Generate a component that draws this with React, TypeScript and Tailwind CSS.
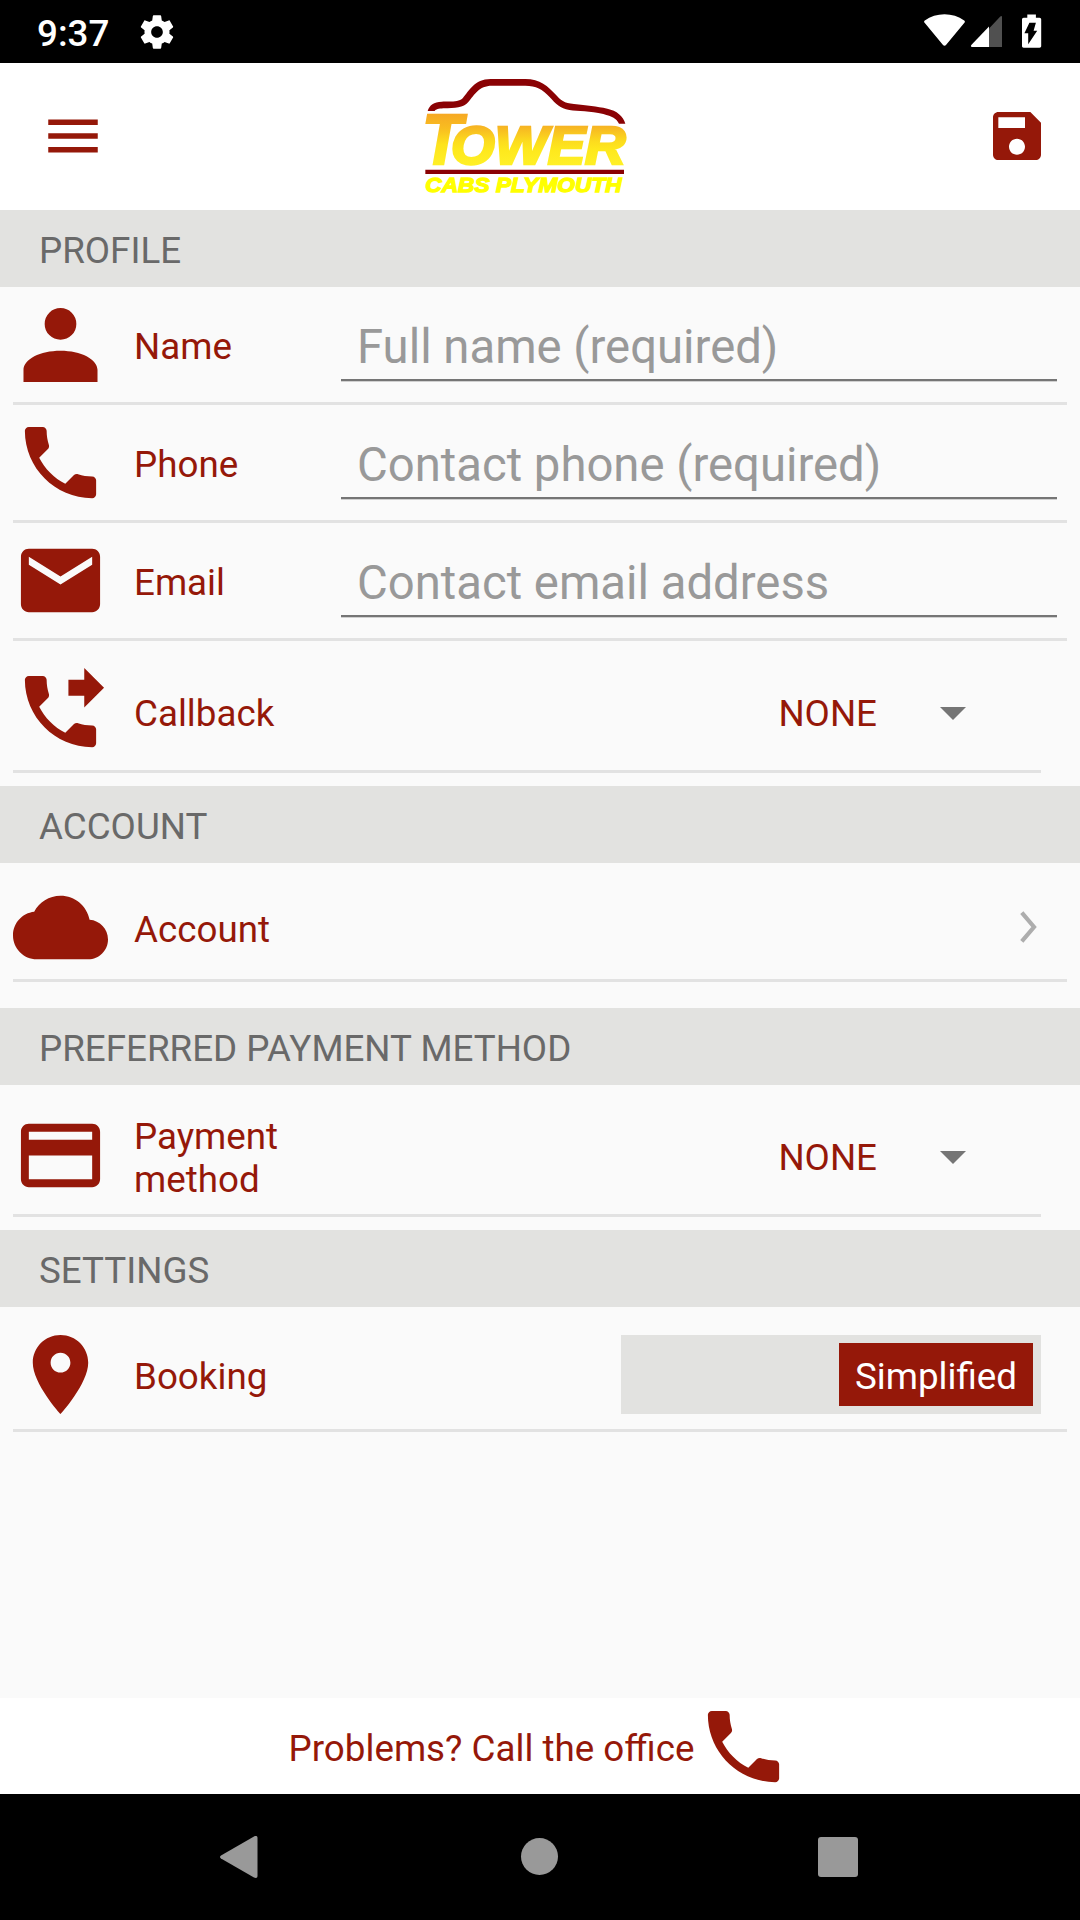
import type { ReactNode } from "react";

const PHONE =
  "M6.62 10.79c1.44 2.83 3.76 5.14 6.59 6.59l2.2-2.2c.27-.27.67-.36 1.02-.24 1.12.37 2.33.57 3.57.57.55 0 1 .45 1 1V20c0 .55-.45 1-1 1-9.39 0-17-7.61-17-17 0-.55.45-1 1-1h3.5c.55 0 1 .45 1 1 0 1.25.2 2.45.57 3.57.11.35.03.74-.25 1.02l-2.2 2.2z";
const PERSON =
  "M12 2.8a4 4 0 1 1 0 8 4 4 0 0 1 0-8zM2.65 21.5v-3.1c0-2.7 4.2-4.85 9.35-4.85s9.35 2.15 9.35 4.85v3.1z";
const MAIL =
  "M20 4H4c-1.1 0-1.99.9-1.99 2L2 18c0 1.1.9 2 2 2h16c1.1 0 2-.9 2-2V6c0-1.1-.9-2-2-2zm0 4l-8 5-8-5V6l8 5 8-5v2z";
const FORWARD = PHONE + "M18 11l5-5-5-5v3h-4v4h4v3z";
const CLOUD =
  "M19.35 10.04C18.67 6.59 15.64 4 12 4 9.11 4 6.6 5.64 5.35 8.04 2.34 8.36 0 10.91 0 14c0 3.31 2.69 6 6 6h13c2.76 0 5-2.24 5-5 0-2.64-2.05-4.78-4.65-4.96z";
const CARD =
  "M20 4H4c-1.11 0-1.99.89-1.99 2L2 18c0 1.11.89 2 2 2h16c1.11 0 2-.89 2-2V6c0-1.11-.89-2-2-2zm0 14H4v-6h16v6zm0-10H4V6h16v2z";
const PIN =
  "M12 2C8.13 2 5 5.13 5 9c0 5.25 7 13 7 13s7-7.75 7-13c0-3.87-3.13-7-7-7zm0 9.5c-1.38 0-2.5-1.12-2.5-2.5s1.12-2.5 2.5-2.5 2.5 1.12 2.5 2.5-1.12 2.5-2.5 2.5z";
const SAVE =
  "M17 3H5c-1.11 0-2 .9-2 2v14c0 1.1.89 2 2 2h14c1.1 0 2-.9 2-2V7l-4-4zm-5 16c-1.66 0-3-1.34-3-3s1.34-3 3-3 3 1.34 3 3-1.34 3-3 3zm3-10H5V5h10v4z";
const GEAR =
  "M19.43 12.98c.04-.32.07-.64.07-.98s-.03-.66-.07-.98l2.11-1.65c.19-.15.24-.42.12-.64l-2-3.46c-.12-.22-.39-.3-.61-.22l-2.49 1c-.52-.4-1.08-.73-1.69-.98l-.38-2.65C14.46 2.18 14.25 2 14 2h-4c-.25 0-.46.18-.49.42l-.38 2.65c-.61.25-1.17.59-1.69.98l-2.49-1c-.23-.09-.49 0-.61.22l-2 3.46c-.13.22-.07.49.12.64l2.11 1.65c-.04.32-.07.65-.07.98s.03.66.07.98l-2.11 1.65c-.19.15-.24.42-.12.64l2 3.46c.12.22.39.3.61.22l2.49-1c.52.4 1.08.73 1.69.98l.38 2.65c.03.24.24.42.49.42h4c.25 0 .46-.18.49-.42l.38-2.65c.61-.25 1.17-.59 1.69-.98l2.49 1c.23.09.49 0 .61-.22l2-3.46c.12-.22.07-.49-.12-.64l-2.11-1.65zM12 15.5c-1.93 0-3.5-1.57-3.5-3.5s1.57-3.5 3.5-3.5 3.5 1.57 3.5 3.5-1.57 3.5-3.5 3.5z";

function Icon({ d, className = "size-[95px]" }: { d: string; className?: string }) {
  return (
    <svg viewBox="0 0 24 24" fill="currentColor" className={`shrink-0 ${className}`}>
      <path d={d} />
    </svg>
  );
}

function StatusBar() {
  return (
    <div className="flex h-[63px] shrink-0 items-start bg-black text-white">
      <span className="ml-[37px] mt-[12px] w-[75px] text-[36.75px] leading-[43px] font-medium">9:37</span>
      <Icon d={GEAR} className="ml-[25px] mt-[12px] size-[40px]" />
      <svg viewBox="0 0 124 40" className="ml-auto mr-[36px] mt-[11px] h-[40px] w-[124px]">
        <path
          d="M4.6 11.8C3.9 11 3.9 10.1 4.8 9.4C16 1.2 33 1.2 44.2 9.4C45.1 10.1 45.1 11 44.4 11.8L26.2 33.8C25.2 35 23.8 35 22.8 33.8z"
          fill="#fff"
        />
        <path d="M69 17.5L80.3 5.6C81.3 4.6 82 5 82 6V36H69z" fill="#505050" />
        <path d="M69 15.6V36H52C50.8 36 50.6 34.8 51.3 34z" fill="#fff" />
        <path
          d="M107.3 3.5h8.6v3.3h3.6c1 0 1.7.7 1.7 1.7v26.6c0 1-.7 1.7-1.7 1.7h-15.8c-1 0-1.7-.7-1.7-1.7V8.5c0-1 .7-1.7 1.7-1.7h3.6z"
          fill="#fff"
        />
        <path d="M109.4 11.8h6.5l-2.3 8h3.6l-9 13.5v-11h-3.8z" fill="#000" />
      </svg>
    </div>
  );
}

function Logo() {
  return (
    <svg viewBox="0 0 780 450" className="h-[150px] w-[260px]">
      <defs>
        <linearGradient id="gold" gradientUnits="userSpaceOnUse" x1="0" y1="160" x2="0" y2="315">
          <stop offset="0" stopColor="#f6a824" />
          <stop offset=".3" stopColor="#f9be20" />
          <stop offset=".6" stopColor="#fde31d" />
          <stop offset="1" stopColor="#fff026" />
        </linearGradient>
        <linearGradient id="goldSmall" gradientUnits="userSpaceOnUse" x1="0" y1="197" x2="0" y2="315">
          <stop offset="0" stopColor="#f6b223" />
          <stop offset=".4" stopColor="#fcdc1e" />
          <stop offset=".6" stopColor="#fee81d" />
          <stop offset="1" stopColor="#fff026" />
        </linearGradient>
      </defs>
      <path
        d="M83 153C88 135 102 126 125 125C150 124 175 128 188 115C208 92 222 58 272 57H376C420 57 445 80 466 103C482 121 492 130 522 132C560 136 590 139 622 146C650 152 670 168 676 191H657C650 176 636 169 610 162C570 153 535 154 508 150C480 145 468 132 448 110C428 88 408 77 376 77H276C236 77 224 104 205 126C190 144 165 144 130 145C115 146 108 148 104 153Z"
        fill="#8a0204"
      />
      <g fontFamily="Liberation Sans" fontWeight="700" fontStyle="italic">
        <text x="66" y="312" fontSize="213" textLength="120" lengthAdjust="spacingAndGlyphs" fill="url(#gold)" stroke="url(#gold)" strokeWidth="7">
          T
        </text>
        <text x="153" y="312" fontSize="161" textLength="524" lengthAdjust="spacingAndGlyphs" fill="url(#goldSmall)" stroke="url(#goldSmall)" strokeWidth="8">
          OWER
        </text>
        <text x="76" y="397" fontSize="62" textLength="589" lengthAdjust="spacingAndGlyphs" fill="#ff0" stroke="#ff0" strokeWidth="4">
          CABS PLYMOUTH
        </text>
      </g>
      <path d="M76 329H672V342H76z" fill="#8a0204" />
    </svg>
  );
}

function Header() {
  return (
    <div className="flex h-[147px] shrink-0 items-start justify-between bg-white">
      <Icon d="M3 18h18v-2H3v2zm0-5h18v-2H3v2zm0-7v2h18V6H3z" className="ml-[40px] mt-[40px] size-[66px]" />
      <div className="-mt-[3px] ml-[173px]">
        <Logo />
      </div>
      <Icon d={SAVE} className="ml-[204px] mr-[31px] mt-[41px] size-[64px]" />
    </div>
  );
}

function SectionTitle({ children }: { children: ReactNode }) {
  return (
    <div className="h-[77px] shrink-0 bg-[#e2e2e0] pl-[39px] pt-[19px] text-[36.75px] leading-[43px] text-[#696969]">
      {children}
    </div>
  );
}

function Row({
  icon,
  label,
  row,
  pad,
  labelPad,
  children,
}: {
  icon: string;
  label: string;
  row: string;
  pad: string;
  labelPad: string;
  children?: ReactNode;
}) {
  return (
    <div className={`ml-[13px] flex shrink-0 items-start border-b-[3px] border-[#e2e2e2] ${row}`}>
      <div className={pad}>
        <Icon d={icon} />
      </div>
      <div className={`ml-[26px] w-[184px] shrink-0 text-[36.75px] leading-[43px] ${labelPad}`}>{label}</div>
      {children}
    </div>
  );
}

function FieldRow({ icon, label, hint }: { icon: string; label: string; hint: string }) {
  return (
    <Row icon={icon} label={label} row="mr-[13px] h-[118px]" pad="pt-[10px]" labelPad="pt-[38px]">
      <div className="ml-[23px] mt-[31px] h-[63px] w-[716px] border-b-2 border-[#757575] pl-[16px] pt-[2px] text-[47.25px] leading-[55px] text-[#999999] shadow-[0_1px_0_#d0d0d0]">
        {hint}
      </div>
    </Row>
  );
}

function Spinner() {
  return (
    <div className="ml-auto mr-[75px] mt-[51px] flex items-center">
      <span className="text-[36.75px] leading-[43px]">NONE</span>
      <svg viewBox="0 0 26 13" className="ml-[63px] h-[13px] w-[26px] fill-[#757575]">
        <path d="M0 0h26L13 13z" />
      </svg>
    </div>
  );
}

function NavBar() {
  return (
    <div className="flex h-[126px] shrink-0 items-center justify-between bg-black pl-[220px] pr-[222px]">
      <svg viewBox="0 0 38 44" className="h-[44px] w-[38px] fill-[#999999]">
        <path d="M1 20.500L34 1.500C36 .500 37.500 1 37.500 3V41C37.500 43 36 43.500 34 42.500L1 23.500C-.300 22.700-.300 21.300 1 20.500z" />
      </svg>
      <div className="mb-px ml-[2px] size-[37px] rounded-full bg-[#999999]" />
      <div className="size-[40px] rounded-[3px] bg-[#999999]" />
    </div>
  );
}

export default function App() {
  return (
    <div className="flex h-[1920px] w-[1080px] flex-col overflow-hidden bg-[#fafafa] font-['Roboto',sans-serif] text-[#951809]">
      <StatusBar />
      <Header />
      <SectionTitle>PROFILE</SectionTitle>
      <FieldRow icon={PERSON} label="Name" hint="Full name (required)" />
      <FieldRow icon={PHONE} label="Phone" hint="Contact phone (required)" />
      <FieldRow icon={MAIL} label="Email" hint="Contact email address" />
      <Row icon={FORWARD} label="Callback" row="mr-[39px] mb-[13px] h-[132px]" pad="pt-[23px]" labelPad="pt-[51px]">
        <Spinner />
      </Row>
      <SectionTitle>ACCOUNT</SectionTitle>
      <Row icon={CLOUD} label="Account" row="mr-[13px] mb-[26px] h-[119px]" pad="pt-[17px]" labelPad="pt-[45px]">
        <svg viewBox="0 0 17 32" className="ml-auto mr-[30px] mt-[48px] h-[32px] w-[17px]" fill="none" stroke="#adadad" strokeWidth="4.2">
          <path d="M1.800 1.700L14 16L1.800 30.300" />
        </svg>
      </Row>
      <SectionTitle>PREFERRED PAYMENT METHOD</SectionTitle>
      <Row icon={CARD} label="Payment method" row="mr-[39px] mb-[13px] h-[132px]" pad="pt-[23px]" labelPad="pt-[30px]">
        <Spinner />
      </Row>
      <SectionTitle>SETTINGS</SectionTitle>
      <Row icon={PIN} label="Booking" row="mr-[13px] h-[125px]" pad="pt-[20px]" labelPad="pt-[48px]">
        <div className="ml-auto mr-[26px] mt-[28px] flex h-[79px] w-[420px] items-center justify-end bg-[#e2e2e0] pr-[8px]">
          <div className="flex h-[63px] w-[194px] items-center justify-center bg-[#951809] pt-[3px] text-[36.75px] leading-[43px] text-white">
            Simplified
          </div>
        </div>
      </Row>
      <div className="mt-auto flex h-[96px] shrink-0 items-start justify-center bg-white">
        <span className="mt-[29px] text-[36.75px] leading-[43px]">Problems? Call the office</span>
        <Icon d={PHONE} className="ml-[2px] mt-[1px] size-[95px]" />
      </div>
      <NavBar />
    </div>
  );
}
